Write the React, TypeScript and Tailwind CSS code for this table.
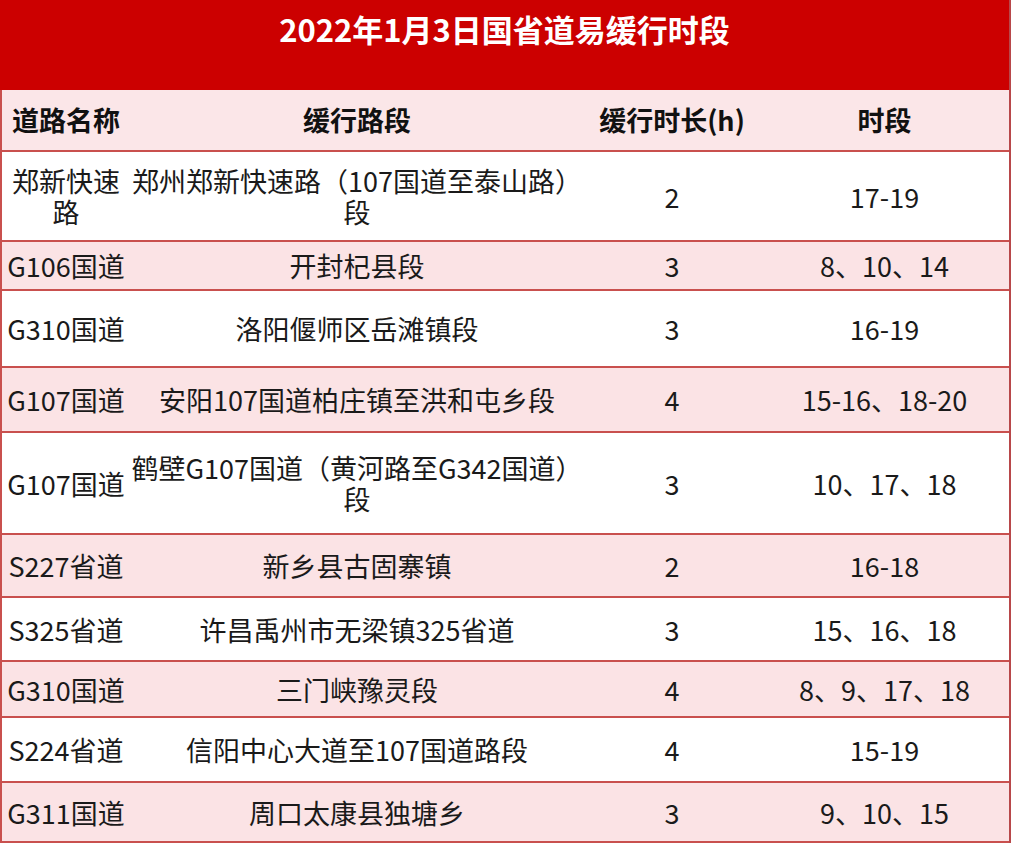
import React from 'react';

type Row = {
  road: React.ReactNode;
  section: React.ReactNode;
  hours: string;
  period: string;
  h: string;
};

const rows: Row[] = [
  { road: <>郑新快速<br />路</>, section: <>郑州郑新快速路（107国道至泰山路）<br />段</>, hours: '2', period: '17-19', h: 'h-[90px]' },
  { road: 'G106国道', section: '开封杞县段', hours: '3', period: '8、10、14', h: 'h-[49px]' },
  { road: 'G310国道', section: '洛阳偃师区岳滩镇段', hours: '3', period: '16-19', h: 'h-[77px]' },
  { road: 'G107国道', section: '安阳107国道柏庄镇至洪和屯乡段', hours: '4', period: '15-16、18-20', h: 'h-[65px]' },
  { road: 'G107国道', section: <>鹤壁G107国道（黄河路至G342国道）<br />段</>, hours: '3', period: '10、17、18', h: 'h-[102px]' },
  { road: 'S227省道', section: '新乡县古固寨镇', hours: '2', period: '16-18', h: 'h-[63px]' },
  { road: 'S325省道', section: '许昌禹州市无梁镇325省道', hours: '3', period: '15、16、18', h: 'h-[64px]' },
  { road: 'G310国道', section: '三门峡豫灵段', hours: '4', period: '8、9、17、18', h: 'h-[56px]' },
  { road: 'S224省道', section: '信阳中心大道至107国道路段', hours: '4', period: '15-19', h: 'h-[65px]' },
  { road: 'G311国道', section: '周口太康县独塘乡', hours: '3', period: '9、10、15', h: 'h-[60px]' },
];

const grid = 'grid grid-cols-[128px_454px_176px_1fr] items-center text-center border-b-2 border-[#c9504e]';

export default function App() {
  return (
    <div
      className="w-[1014px] h-[846px] bg-white overflow-hidden"
      style={{ fontFamily: '"Noto Sans CJK SC", "Noto Sans", sans-serif' }}
    >
      <div className="w-[1011px] border-r-2 border-[#b8484a]">
        {/* title bar */}
        <div className="h-[90px] bg-[#cc0000] pt-[8px] text-center text-[31px] leading-[42px] font-bold text-white">
          2022年1月3日国省道易缓行时段
        </div>

        <div className="border-l-2 border-[#c9504e]">
          {/* header */}
          <div className={`${grid} h-[62px] bg-[#fbe6e8] text-[27px] font-bold text-[#111]`}>
            <div>道路名称</div>
            <div>缓行路段</div>
            <div>缓行时长(h)</div>
            <div>时段</div>
          </div>

          {rows.map((r, i) => (
            <div
              key={i}
              className={`${grid} ${r.h} text-[27px] leading-[31px] text-[#1a1a1a] ${
                i % 2 === 0 ? 'bg-white' : 'bg-[#fbe3e5]'
              }`}
            >
              <div className="whitespace-nowrap">{r.road}</div>
              <div className="whitespace-nowrap">{r.section}</div>
              <div>{r.hours}</div>
              <div className="whitespace-nowrap">{r.period}</div>
            </div>
          ))}
        </div>
      </div>
    </div>
  );
}
